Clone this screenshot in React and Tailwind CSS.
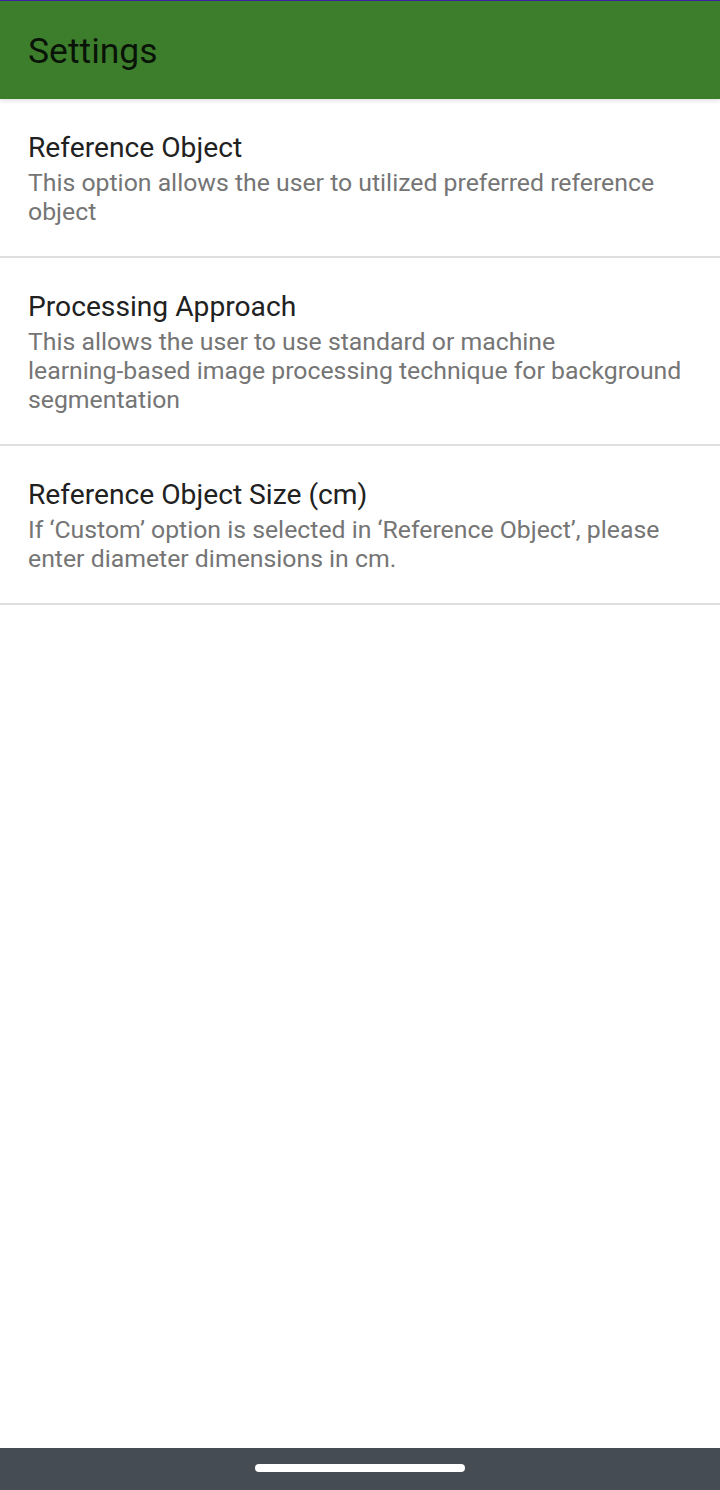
const ITEMS = [
  {
    title: 'Reference Object',
    summary: 'This option allows the user to utilized preferred reference object',
  },
  {
    title: 'Processing Approach',
    summary: (
      <>
        This allows the user to use standard or machine{' '}
        <span className="whitespace-nowrap">learning-based</span> image processing technique for
        background segmentation
      </>
    ),
  },
  {
    title: 'Reference Object Size (cm)',
    summary:
      'If \u2018Custom\u2019 option is selected in \u2018Reference Object\u2019, please enter diameter dimensions in cm.',
  },
];

export default function App() {
  return (
    <div className="w-[720px] h-[1490px] bg-white flex flex-col font-['Roboto',sans-serif] overflow-hidden">
      {/* app bar */}
      <div className="h-[99px] flex-shrink-0 bg-[#3d7e2d] border-t border-[#3a22a8] flex items-center px-7 shadow-[0_2px_4px_rgba(0,0,0,0.12)] relative z-10">
        <h1 className="text-[35.5px] text-black/85 leading-none pt-[3px]">Settings</h1>
      </div>

      {/* preferences */}
      <ul className="flex-1">
        {ITEMS.map((item) => (
          <li key={item.title} className="px-7 pt-[32px] pb-[30px] border-b-2 border-[#e0e0e0]">
            <p className="text-[28.2px] leading-[33px] text-[#212121]">{item.title}</p>
            <p className="mt-[4px] text-[24.8px] leading-[29px] text-[#757575]">{item.summary}</p>
          </li>
        ))}
      </ul>

      {/* nav bar */}
      <div className="h-[42px] flex-shrink-0 bg-[#454c53] flex justify-center pt-4">
        <div className="w-[210px] h-2 rounded-full bg-white"></div>
      </div>
    </div>
  );
}
